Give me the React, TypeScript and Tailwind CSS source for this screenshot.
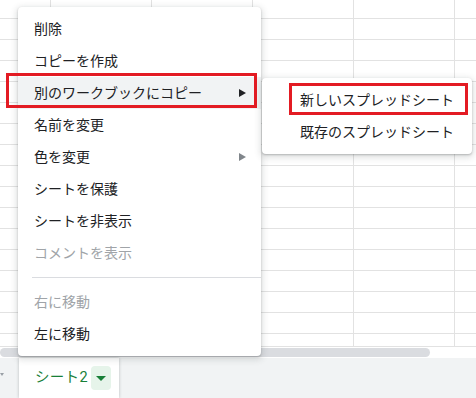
import React from "react";

const Arrow = ({ color }: { color: string }) => (
  <svg width="7" height="8" viewBox="0 0 7 8" className="block">
    <polygon points="0,0 7,4 0,8" fill={color} />
  </svg>
);

type Item = { label: string; disabled?: boolean; sub?: boolean; active?: boolean; boxed?: boolean };

const items: Item[] = [
  { label: "削除" },
  { label: "コピーを作成" },
  { label: "別のワークブックにコピー", sub: true, active: true, boxed: true },
  { label: "名前を変更" },
  { label: "色を変更", sub: true },
  { label: "シートを保護" },
  { label: "シートを非表示" },
  { label: "コメントを表示", disabled: true },
];

const items2: Item[] = [{ label: "右に移動", disabled: true }, { label: "左に移動" }];

function MenuRow({ it }: { it: Item }) {
  return (
    <div
      className={`relative h-8 flex items-center justify-between pl-4 pr-[15px] ${
        it.active ? "bg-[#f1f3f4]" : ""
      }`}
    >
      <span className={it.disabled ? "text-[#a0a4a8]" : "text-[#202124]"}>{it.label}</span>
      {it.sub && <Arrow color={it.active ? "#202124" : "#80868b"} />}
      {it.boxed && (
        <div className="absolute left-[-12px] top-[-4px] w-[251px] h-[35px] border-[3px] border-[#e31b23]" />
      )}
    </div>
  );
}

export default function App() {
  const rows = Array.from({ length: 16 });
  const cols = [51, 101, 101, 101, 101];
  return (
    <div
      className="relative w-[476px] h-[398px] overflow-hidden bg-white text-[14px]"
      style={{ fontFamily: 'Roboto, "Noto Sans CJK JP", sans-serif' }}
    >
      {/* grid */}
      <div className="flex flex-col h-[346px] overflow-hidden">
        <div className="flex h-[19px] shrink-0 border-b border-[#e2e2e2]">
          {cols.map((w, i) => (
            <div key={i} style={{ width: w }} className="shrink-0 border-r border-[#e2e2e2]" />
          ))}
        </div>
        {rows.map((_, r) => (
          <div key={r} className="flex h-[21px] shrink-0 border-b border-[#e2e2e2]">
            {cols.map((w, i) => (
              <div key={i} style={{ width: w }} className="shrink-0 border-r border-[#e2e2e2]" />
            ))}
          </div>
        ))}
      </div>
      {/* scrollbar */}
      <div className="h-[12px] border-t border-[#e2e2e2] pt-[1px]">
        <div className="w-[430px] h-[9px] rounded-full bg-[#dadce0]" />
      </div>
      {/* tab bar */}
      <div className="flex h-[40px] bg-[#f1f3f4]">
        <div className="w-[19px] flex items-center">
          <svg width="4" height="4" viewBox="0 0 4 4" className="block -mt-[6px]">
            <polygon points="0,0 4,0 2,3" fill="#9aa0a6" />
          </svg>
        </div>
        <div className="w-[100px] bg-white flex items-center pl-[16px] shadow-[0_0_3px_rgba(60,64,67,0.3)]">
          <span className="text-[#188038] text-[14.5px] tracking-[0.3px]">シート2</span>
          <div className="ml-[3px] w-[20px] h-[24px] bg-[#e6f4ea] flex items-center justify-center rounded-sm">
            <svg width="10" height="5" viewBox="0 0 10 5">
              <polygon points="0,0 10,0 5,5" fill="#188038" />
            </svg>
          </div>
        </div>
      </div>

      {/* context menu */}
      <div className="absolute left-[18px] top-[7px] w-[243px] py-[6px] bg-white rounded shadow-[0_2px_6px_2px_rgba(60,64,67,0.15),0_1px_2px_rgba(60,64,67,0.3)]">
        {items.map((it) => (
          <MenuRow key={it.label} it={it} />
        ))}
        <div className="my-[8px] ml-[14px] h-px bg-[#dadce0]" />
        {items2.map((it) => (
          <MenuRow key={it.label} it={it} />
        ))}
      </div>

      {/* submenu */}
      <div className="absolute left-[262px] top-[78px] w-[210px] py-[6px] bg-white rounded shadow-[0_2px_6px_2px_rgba(60,64,67,0.15),0_1px_2px_rgba(60,64,67,0.3)]">
        <div className="relative h-8 flex items-center pl-[38px] text-[#202124]">
          新しいスプレッドシート
          <div className="absolute left-[27px] top-[-1px] w-[179px] h-[32px] border-[3px] border-[#e31b23]" />
        </div>
        <div className="h-8 flex items-center pl-[38px] text-[#202124]">既存のスプレッドシート</div>
      </div>
    </div>
  );
}
